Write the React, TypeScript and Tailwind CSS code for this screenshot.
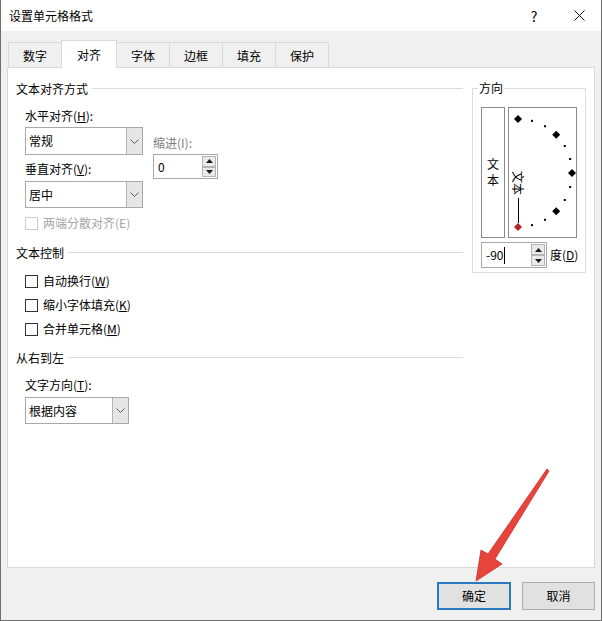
import React from 'react'

function Chevron() {
  return (
    <svg width="9" height="5" viewBox="0 0 9 5" fill="none">
      <path d="M0.5 0.5 L4.5 4.5 L8.5 0.5" stroke="#5f5f5f" strokeWidth="1" />
    </svg>
  )
}

function Select({ value, className }: { value: string; className: string }) {
  return (
    <div className={`flex border border-[#a8a8a8] bg-white ${className}`}>
      <div className="flex-1 flex items-center pl-[3px]">{value}</div>
      <div className="w-[16px] flex items-center justify-center bg-[#e6e6e6] border-l border-[#b4b4b4]">
        <Chevron />
      </div>
    </div>
  )
}

function SpinBtn({ up }: { up?: boolean }) {
  return (
    <div className="flex-1 flex items-center justify-center bg-[#eaeaea] border border-[#b4b4b4]">
      <svg width="7" height="4" viewBox="0 0 7 4">
        <path d={up ? 'M0 4 L3.5 0 L7 4 Z' : 'M0 0 L3.5 4 L7 0 Z'} fill="#1a1a1a" />
      </svg>
    </div>
  )
}

function Spin({ value, className, caret }: { value: string; className: string; caret?: boolean }) {
  return (
    <div className={`flex border border-[#a8a8a8] bg-white ${className}`}>
      <div className="flex-1 flex items-center pl-[4px]">
        {value}
        {caret && <span className="ml-px w-px h-[17px] bg-black" />}
      </div>
      <div className="w-[15px] flex flex-col py-px pr-px">
        <SpinBtn up />
        <SpinBtn />
      </div>
    </div>
  )
}

function Header({ label }: { label: string }) {
  return (
    <div className="h-4 flex items-center">
      <span>{label}</span>
      <div className="flex-1 h-px bg-[#dcdcdc] ml-[4px] -mt-[2px]" />
    </div>
  )
}

function Check({ label, k, disabled }: { label: string; k: string; disabled?: boolean }) {
  return (
    <div className={`h-4 flex items-center pl-[9px] ${disabled ? 'text-[#a6a6a6]' : ''}`}>
      <div className={`w-[13px] h-[13px] border bg-white ${disabled ? 'border-[#cccccc]' : 'border-[#333333]'}`} />
      <span className="ml-[5px]">
        {label}({disabled ? k : <u className="underline-offset-1">{k}</u>})
      </span>
    </div>
  )
}

function Dial() {
  const cx = 9
  const cy = 65
  const r = 54
  const pts = []
  for (let a = 90; a >= -90; a -= 15) {
    const rad = (a * Math.PI) / 180
    const x = cx + r * Math.cos(rad)
    const y = cy - r * Math.sin(rad)
    if (a % 45 === 0) {
      const fill = a === -90 ? '#b3262a' : '#000'
      pts.push(
        <path key={a} d={`M${x} ${y - 4} L${x + 4} ${y} L${x} ${y + 4} L${x - 4} ${y} Z`} fill={fill} />
      )
    } else {
      pts.push(<rect key={a} x={x - 1} y={y - 1} width="2" height="2" fill="#000" />)
    }
  }
  return (
    <svg width="67" height="129" viewBox="0 0 67 129">
      {pts}
      <text
        x="0"
        y="0"
        transform="translate(9 75) rotate(90)"
        fontSize="12"
        textAnchor="middle"
        dominantBaseline="central"
        fontFamily="'Noto Sans CJK SC', sans-serif"
        fill="#000"
      >
        文本
      </text>
      <line x1="9.5" y1="90" x2="9.5" y2="115" stroke="#000" strokeWidth="1" />
    </svg>
  )
}

const tabs = ['数字', '对齐', '字体', '边框', '填充', '保护']

export default function App() {
  return (
    <div className="relative w-[602px] h-[621px] bg-[#f0f0f0] border-l border-r border-b border-[#6e6e6e] font-['Noto_Sans_CJK_SC',sans-serif] text-[12px] leading-4 text-black overflow-hidden flex flex-col">
      {/* Title bar */}
      <div className="h-[31px] shrink-0 bg-white flex items-center pl-[8px]">
        <span className="flex-1">设置单元格格式</span>
        <span className="w-[10px] text-center text-[14px] mr-[35px]">?</span>
        <svg className="mr-[16px]" width="11" height="11" viewBox="0 0 11 11">
          <path d="M0.5 0.5 L10.5 10.5 M10.5 0.5 L0.5 10.5" stroke="#111" strokeWidth="1" />
        </svg>
      </div>

      {/* Tabs */}
      <div className="mt-[9px] h-[27px] flex items-end pl-[7px]">
        {tabs.map((t) =>
          t === '对齐' ? (
            <div
              key={t}
              className="relative z-10 w-[56px] h-[28px] -mb-px -ml-px bg-white border border-b-0 border-[#d9d9d9] flex items-center justify-center"
            >
              {t}
            </div>
          ) : (
            <div
              key={t}
              className="w-[54px] h-[25px] -ml-px first:ml-0 bg-[#f0f0f0] border border-b-0 border-[#d9d9d9] flex items-center justify-center pt-[2px]"
            >
              {t}
            </div>
          )
        )}
      </div>

      {/* Panel */}
      <div className="mx-[6px] h-[501px] shrink-0 bg-white border border-[#d9d9d9] pt-[13px] pl-[8px] pr-[7px] flex">
        <div className="w-[447px] flex flex-col">
          <Header label="文本对齐方式" />
          <div className="mt-[11px] pl-[9px]">
            水平对齐(<u className="underline-offset-1">H</u>):
          </div>
          <div className="mt-[3px] pl-[9px] flex">
            <div className="w-[118px] flex flex-col">
              <Select value="常规" className="h-[28px]" />
              <div className="mt-[6px]">
                垂直对齐(<u className="underline-offset-1">V</u>):
              </div>
              <Select value="居中" className="mt-[4px] h-[27px]" />
            </div>
            <div className="ml-[10px] flex flex-col">
              <div className="mt-[8px] text-[#7d7d7d]">缩进(I):</div>
              <Spin value="0" className="mt-[3px] w-[65px] h-[25px]" />
            </div>
          </div>
          <div className="mt-[7px]">
            <Check label="两端分散对齐" k="E" disabled />
          </div>

          <div className="mt-[14px]">
            <Header label="文本控制" />
          </div>
          <div className="mt-[12px] flex flex-col gap-[8px]">
            <Check label="自动换行" k="W" />
            <Check label="缩小字体填充" k="K" />
            <Check label="合并单元格" k="M" />
          </div>

          <div className="mt-[13px]">
            <Header label="从右到左" />
          </div>
          <div className="mt-[11px] pl-[9px]">
            文字方向(<u className="underline-offset-1">T</u>):
          </div>
          <div className="mt-[4px] pl-[9px]">
            <Select value="根据内容" className="w-[104px] h-[27px]" />
          </div>
        </div>

        {/* 方向 */}
        <div className="relative ml-[9px] mt-[7px] w-[114px] h-[185px] border border-[#dcdcdc] pt-[18px] pl-[8px]">
          <span className="absolute -top-[9px] left-[5px] bg-white px-px">方向</span>
          <div className="flex gap-[3px]">
            <div className="w-[24px] h-[131px] border border-[#8a8a8a] flex flex-col items-center justify-center pb-[2px]">
              <span>文</span>
              <span>本</span>
            </div>
            <div className="w-[69px] h-[131px] border border-[#8a8a8a]">
              <Dial />
            </div>
          </div>
          <div className="mt-[4px] flex items-center">
            <Spin value="-90" caret className="w-[66px] h-[26px]" />
            <span className="ml-[3px]">
              度(<u className="underline-offset-1">D</u>)
            </span>
          </div>
        </div>
      </div>

      {/* Buttons */}
      <div className="mt-[14px] flex justify-end gap-[11px] pr-[6px]">
        <button className="w-[74px] h-[28px] bg-[#e1e1e1] border-2 border-[#2a78c0] flex items-center justify-center">
          确定
        </button>
        <button className="w-[73px] h-[28px] bg-[#e1e1e1] border border-[#adadad] flex items-center justify-center">
          取消
        </button>
      </div>

      {/* Annotation arrow */}
      <svg className="absolute left-[-1px] top-0 pointer-events-none z-20" width="603" height="621" viewBox="0 0 603 621">
        <polygon
          points="549,471 495,559 502,564 476,581 481,550 488,554 547,469"
          fill="#e8443c"
          stroke="#c9302a"
          strokeWidth="0.8"
          strokeLinejoin="round"
        />
      </svg>
    </div>
  )
}
